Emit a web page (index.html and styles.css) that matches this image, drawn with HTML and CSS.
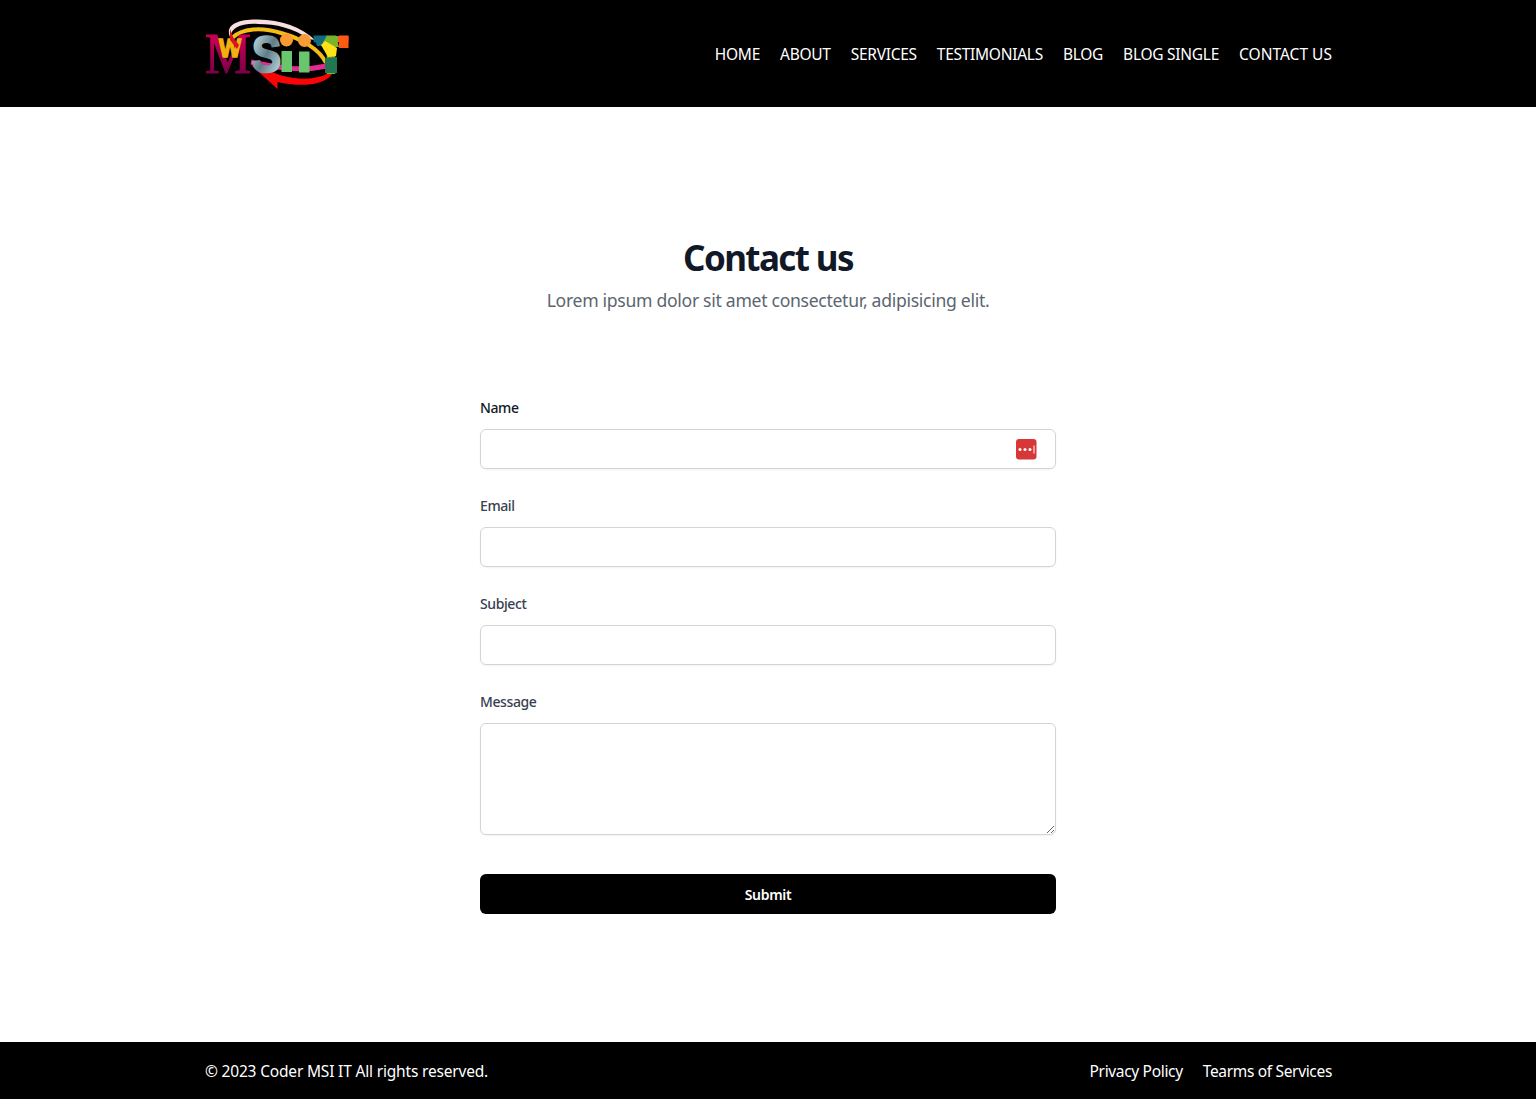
FILE: index.html
```html
<!DOCTYPE html>
<html lang="en">
<head>
<meta charset="utf-8">
<title>Contact us</title>
<link rel="stylesheet" href="styles.css">
</head>
<body>
<header class="header">
  <a class="logo" aria-label="MSI IT">
    <svg width="148" height="74" viewBox="204 18 148 74">
      <defs>
        <linearGradient id="wine" x1="0" y1="0" x2="0" y2="1"><stop offset="0.25" stop-color="#c80055"/><stop offset="0.85" stop-color="#780048"/></linearGradient>
        <linearGradient id="steel" x1="0" y1="0" x2="1" y2="1"><stop offset="0.2" stop-color="#a8c4cb"/><stop offset="0.5" stop-color="#5e7d88"/><stop offset="0.8" stop-color="#a5c5cd"/></linearGradient>
        <linearGradient id="bar"><stop offset="0.28" stop-color="#126a80"/><stop offset="0.28" stop-color="#78b52c"/><stop offset="0.7" stop-color="#78b52c"/><stop offset="0.7" stop-color="#ff5a13"/></linearGradient>
      </defs>
      <path d="M230 37C225 25 237 19 258 19.500C281 20 302 27 315 40L309 39C293 28 276 24 258 24C240 23 232 28 230 37Z" fill="#f7dfe2"/>
      <path d="M232 38C242 28 262 27 281 33C303 39 320 50 326 63" fill="none" stroke="#f4bd13" stroke-width="4"/>
      <path d="M251 62C275 67 299 72 327 66" fill="none" stroke="#e52a91" stroke-width="5"/>
      <path d="M251 65L277.500 89L277.500 82C299 87 324 86 332 74V71C318 81 293 81 272 72Z" fill="#fa0505"/>
      <text class="logo-m" x="205" y="72.500" textLength="46" lengthAdjust="spacingAndGlyphs" fill="url(#wine)" stroke="url(#wine)">M</text>
      <text class="logo-w" x="219" y="57" textLength="22" lengthAdjust="spacingAndGlyphs">W</text>
      <path d="M230 29L233 37L239 45L237 49L230 40Z" fill="#dc1220"/>
      <text class="logo-s" x="252" y="72" textLength="29" lengthAdjust="spacingAndGlyphs" fill="url(#steel)" stroke="url(#steel)">S</text>
      <circle cx="286.500" cy="40" r="6.500" fill="#f99b35"/><circle cx="304.500" cy="40.500" r="6.500" fill="#f99b35"/>
      <rect x="281.500" y="51" width="10.500" height="21" fill="#69c66f"/><rect x="299" y="51.500" width="10.500" height="21" fill="#69c66f"/>
      <text class="logo-t" x="313" y="74" textLength="36" lengthAdjust="spacingAndGlyphs" fill="url(#bar)">T</text>
      <path d="M326 35.500H336L339 47H331L322 43Z" fill="#78b52c"/>
      <path d="M339 35.500H348.500V48H339Z" fill="#ff5a13"/>
      <path d="M313.500 35.500H327L321 46H317Z" fill="#126a80"/>
      <path d="M321 45L325 41L332 45L337 48L336 56L328 57Z" fill="#ffe116"/>
      <path d="M325 58L337 57V73H325Z" fill="#237653"/>
    </svg>
  </a>
  <nav class="nav">
    <a>HOME</a><a>ABOUT</a><a>SERVICES</a><a>TESTIMONIALS</a><a>BLOG</a><a>BLOG SINGLE</a><a class="nav-contact">CONTACT US</a>
  </nav>
</header>
<main class="main">
  <h1 class="title"><span>Contact us</span></h1>
  <p class="lead"><span>Lorem ipsum dolor sit amet consectetur, adipisicing elit.</span></p>
  <form class="form">
    <div class="field"><label class="label label-dark" for="name">Name</label>
      <div class="input-wrap"><input class="input" id="name">
        <svg class="badge" width="21" height="21" viewBox="0 0 21 21"><rect width="20.500" height="20.500" rx="3" fill="#d8373a"/><g fill="#fff"><circle cx="4" cy="10.500" r="1.500"/><circle cx="9" cy="10.500" r="1.500"/><circle cx="14" cy="10.500" r="1.500"/><rect x="17.500" y="6.500" width="1" height="8"/></g></svg>
      </div></div>
    <div class="field"><label class="label" for="email">Email</label><input class="input" id="email"></div>
    <div class="field"><label class="label" for="subject">Subject</label><input class="input" id="subject"></div>
    <div class="field"><label class="label" for="message">Message</label><textarea class="input area" id="message"></textarea></div>
    <button class="submit" type="button">Submit</button>
  </form>
</main>
<footer class="footer">
  <span class="copy">© 2023 Coder MSI IT All rights reserved.</span>
  <div class="links"><a>Privacy Policy</a><a>Tearms of Services</a></div>
</footer>
</body>
</html>
```
FILE: styles.css
```css
* { box-sizing: border-box; }
body { margin: 0; min-height: 1099px; display: flex; flex-direction: column; font-family: "Noto Sans", sans-serif; font-size: 16px; background: #fff; }
.header, .footer { background: #000; color: #fff; padding: 0 204px; display: flex; align-items: center; justify-content: space-between; }
.header { height: 107px; }
.logo { display: flex; padding-top: 2px; }
.logo-m { font: 57px "Liberation Serif", serif; stroke-width: 1.2px; }
.logo-w { font: bold 26px "Liberation Sans", sans-serif; fill: #f2b012; stroke: #f2b012; stroke-width: 1.5px; }
.logo-s { font: bold 50px "Liberation Sans", sans-serif; stroke-width: 2.5px; }
.logo-t { font: bold 56px "Liberation Sans", sans-serif; }
.nav, .links { display: flex; gap: 20px; white-space: nowrap; }
.nav { font-size: 15.500px; letter-spacing: -0.27px; padding-top: 1px; }
.nav-contact { letter-spacing: 0.02px; }
.main { flex: 1; display: flex; flex-direction: column; align-items: center; padding-top: 128px; }
.title { margin: 0; font-size: 35px; line-height: 46px; font-weight: 700; letter-spacing: -1.6px; color: #111827; }
.lead { margin: 7px 0 0; font-size: 17.600px; line-height: 24px; letter-spacing: -0.3px; color: #5b6570; }
.form { width: 576px; margin-top: 86px; display: flex; flex-direction: column; }
.field { display: flex; flex-direction: column; margin-bottom: 27px; }
.label { font-size: 14px; line-height: 20px; margin-bottom: 11px; font-weight: 500; color: #374151; letter-spacing: -0.4px; }
.label-dark { color: #111827; }
.input-wrap { position: relative; display: flex; }
.input { width: 100%; height: 40px; border: 1px solid #d1d5db; border-radius: 6px; background: #fff; box-shadow: 0 1px 2px rgba(0,0,0,.05); }
.badge { position: absolute; right: 19px; top: 10px; }
.area { height: 112px; resize: vertical; }
.submit { margin-top: 12px; height: 40px; border: 0; border-radius: 6px; background: #000; color: #fff; font: 600 14px "Noto Sans", sans-serif; letter-spacing: -0.3px; }
.footer { height: 57px; font-size: 15.500px; padding-left: 205px; }
.copy { letter-spacing: -0.18px; }
.links { letter-spacing: -0.33px; }
```
